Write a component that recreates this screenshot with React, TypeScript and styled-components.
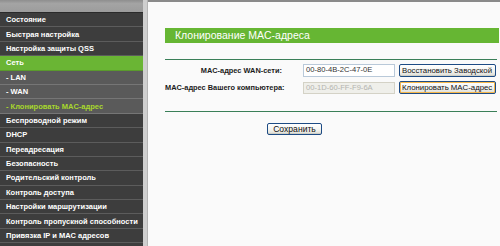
import React from "react";
import styled, { createGlobalStyle } from "styled-components";

const Global = createGlobalStyle`
  html, body { margin: 0; padding: 0; background: #fafafa; }
  body { font-family: "Liberation Sans", Arial, sans-serif; width: 500px; height: 246px; overflow: hidden; }
`;

const Page = styled.div`
  display: flex;
  width: 500px;
  height: 246px;
  overflow: hidden;
`;

const Sidebar = styled.nav`
  width: 143px;
  flex: none;
  display: flex;
  flex-direction: column;
  background: #3d3d3d;
`;

const SideHead = styled.div`
  height: 13px;
  flex: none;
  background: linear-gradient(#8e8e8e, #a4a4a4 30%, #9c9c9c);
  border-bottom: 1px solid #2a2a2a;
  box-sizing: border-box;
`;

const Item = styled.div<{ $kind: "main" | "sub" | "open" | "active" }>`
  height: 14.4px;
  flex: none;
  box-sizing: border-box;
  display: flex;
  align-items: center;
  padding-left: 6px;
  font-size: 7.5px;
  font-weight: bold;
  white-space: nowrap;
  color: ${(p) => (p.$kind === "active" ? "#a8d82c" : "#ffffff")};
  background: ${(p) =>
    p.$kind === "open" ? "#6ab534" : p.$kind === "sub" || p.$kind === "active" ? "#5a5a5a" : "#3d3d3d"};
  border-bottom: 1px solid
    ${(p) => (p.$kind === "sub" || p.$kind === "active" ? "#767676" : p.$kind === "open" ? "#5a9a2c" : "#5c5c5c")};
`;

const Strip = styled.div`
  width: 4px;
  flex: none;
  background: #cfcfcf;
  border-right: 1px solid #b4b4b4;
`;

const Main = styled.main`
  flex: 1;
  border-top: 2px solid #8a8a8a;
  padding: 26px 1px 0 17px;
  background: #fafafa;
`;

const TitleBar = styled.div`
  height: 15px;
  background: #66b633;
  color: #fff;
  font-size: 10.5px;
  line-height: 15px;
  padding-left: 10px;
  white-space: nowrap;
`;

const Rule = styled.div<{ $top: number }>`
  height: 1px;
  background: #3a7f58;
  margin-top: ${(p) => p.$top}px;
  margin-right: 2px;
`;

const Form = styled.div`
  display: flex;
  flex-direction: column;
  gap: 5px;
  padding-top: 4px;
`;

const Row = styled.div`
  display: flex;
  align-items: center;
  height: 12.5px;
`;

const Label = styled.label`
  width: 117px;
  text-align: right;
  font-size: 7.4px;
  font-weight: bold;
  color: #1a1a1a;
  white-space: nowrap;
  margin-right: 21px;
`;

const Field = styled.div<{ $disabled?: boolean }>`
  width: 92px;
  height: 12.5px;
  box-sizing: border-box;
  border: 1px solid ${(p) => (p.$disabled ? "#d4d2c6" : "#b9c9d9")};
  background: ${(p) => (p.$disabled ? "#efefea" : "#ffffff")};
  color: ${(p) => (p.$disabled ? "#b4b4b0" : "#333")};
  font-size: 7.6px;
  line-height: 10.5px;
  padding-left: 2px;
  white-space: nowrap;
  overflow: hidden;
  margin-right: 4px;
`;

const Button = styled.button<{ $hot?: boolean }>`
  box-sizing: border-box;
  height: 13px;
  padding: 0 2px;
  border: 1px solid #1d4b84;
  border-radius: 2px;
  background: linear-gradient(#ffffff, #f2f2ee 60%, #dcdcd4);
  box-shadow: ${(p) => (p.$hot ? "inset 0 0 0 1px #f6b74a" : "inset 0 -1px 0 #cfcfc6")};
  font-family: "Liberation Sans", Arial, sans-serif;
  font-size: 7.8px;
  color: #111;
  white-space: nowrap;
  overflow: hidden;
  text-align: left;
  cursor: pointer;
`;

const WideButton = styled(Button)`
  width: 97px;
`;

const SaveRow = styled.div`
  padding: 6px 0 0 102px;
`;

const SaveButton = styled(Button)`
  width: 55px;
  height: 12px;
  text-align: center;
  font-size: 8.6px;
  padding: 0;
`;

const items: { t: string; k: "main" | "sub" | "open" | "active" }[] = [
  { t: "Состояние", k: "main" },
  { t: "Быстрая настройка", k: "main" },
  { t: "Настройка защиты QSS", k: "main" },
  { t: "Сеть", k: "open" },
  { t: "- LAN", k: "sub" },
  { t: "- WAN", k: "sub" },
  { t: "- Клонировать MAC-адрес", k: "active" },
  { t: "Беспроводной режим", k: "main" },
  { t: "DHCP", k: "main" },
  { t: "Переадресация", k: "main" },
  { t: "Безопасность", k: "main" },
  { t: "Родительский контроль", k: "main" },
  { t: "Контроль доступа", k: "main" },
  { t: "Настройки маршрутизации", k: "main" },
  { t: "Контроль пропускной способности", k: "main" },
  { t: "Привязка IP и MAC адресов", k: "main" },
];

export default function App() {
  return (
    <Page>
      <Global />
      <Sidebar>
        <SideHead />
        {items.map((it) => (
          <Item key={it.t} $kind={it.k}>
            {it.t}
          </Item>
        ))}
      </Sidebar>
      <Strip />
      <Main>
        <TitleBar>Клонирование MAC-адреса</TitleBar>
        <Rule $top={16} />
        <Form>
          <Row>
            <Label>MAC-адрес WAN-сети:</Label>
            <Field>00-80-4B-2C-47-0E</Field>
            <WideButton>Восстановить Заводской</WideButton>
          </Row>
          <Row>
            <Label>MAC-адрес Вашего компьютера:</Label>
            <Field $disabled>00-1D-60-FF-F9-6A</Field>
            <WideButton $hot>Клонировать MAC-адрес</WideButton>
          </Row>
        </Form>
        <Rule $top={17} />
        <SaveRow>
          <SaveButton>Сохранить</SaveButton>
        </SaveRow>
      </Main>
    </Page>
  );
}
